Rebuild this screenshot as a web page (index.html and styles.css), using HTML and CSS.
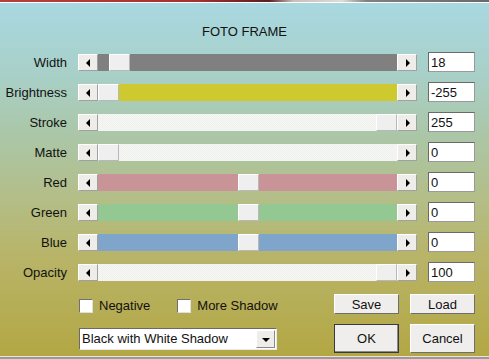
FILE: index.html
```html
<!DOCTYPE html>
<html lang="en">
<head>
    <meta charset="UTF-8">
    <title>Foto Frame</title>
    <link rel="stylesheet" href="styles.css">
</head>
<body>
    <!-- strip of the picture behind the dialog -->
    <div class="photo-strip"></div>

    <div class="dialog">
        <div class="title">FOTO FRAME</div>

        <div class="sliders">
            <label>Width</label>
            <div class="scrollbar">
                <span class="arrow left"></span>
                <div class="track gray"><span class="thumb" style="margin-left: 11px"></span></div>
                <span class="arrow right"></span>
            </div>
            <input class="value" type="text" value="18">

            <label>Brightness</label>
            <div class="scrollbar">
                <span class="arrow left"></span>
                <div class="track yellow"><span class="thumb" style="margin-left: 0px"></span></div>
                <span class="arrow right"></span>
            </div>
            <input class="value" type="text" value="-255">

            <label>Stroke</label>
            <div class="scrollbar">
                <span class="arrow left"></span>
                <div class="track white"><span class="thumb" style="margin-left: 278px"></span></div>
                <span class="arrow right"></span>
            </div>
            <input class="value" type="text" value="255">

            <label>Matte</label>
            <div class="scrollbar">
                <span class="arrow left"></span>
                <div class="track white"><span class="thumb" style="margin-left: 0px"></span></div>
                <span class="arrow right"></span>
            </div>
            <input class="value" type="text" value="0">

            <label>Red</label>
            <div class="scrollbar">
                <span class="arrow left"></span>
                <div class="track red"><span class="thumb" style="margin-left: 140px"></span></div>
                <span class="arrow right"></span>
            </div>
            <input class="value" type="text" value="0">

            <label>Green</label>
            <div class="scrollbar">
                <span class="arrow left"></span>
                <div class="track green"><span class="thumb" style="margin-left: 140px"></span></div>
                <span class="arrow right"></span>
            </div>
            <input class="value" type="text" value="0">

            <label>Blue</label>
            <div class="scrollbar">
                <span class="arrow left"></span>
                <div class="track blue"><span class="thumb" style="margin-left: 140px"></span></div>
                <span class="arrow right"></span>
            </div>
            <input class="value" type="text" value="0">

            <label>Opacity</label>
            <div class="scrollbar">
                <span class="arrow left"></span>
                <div class="track white"><span class="thumb" style="margin-left: 278px"></span></div>
                <span class="arrow right"></span>
            </div>
            <input class="value" type="text" value="100">
        </div>

        <div class="bottom">
            <div class="checks">
                <span class="check"><span class="box"></span>Negative</span>
                <span class="check"><span class="box"></span>More Shadow</span>
            </div>
            <button class="btn">Save</button>
            <button class="btn">Load</button>

            <div class="select-wrap">
                <div class="select">
                    <span class="select-text">Black with White Shadow</span>
                    <span class="select-btn"></span>
                </div>
            </div>
            <button class="btn big default">OK</button>
            <button class="btn big">Cancel</button>
        </div>
    </div>

    <div class="bottom-edge"></div>
</body>
</html>
```

FILE: styles.css
```css
body {
    margin: 0;
    padding: 0;
    width: 489px;
    height: 359px;
    overflow: hidden;
    font-family: 'Liberation Sans', Arial, sans-serif;
    font-size: 13px;
    color: #111;
    background: #9a9a9a;
}

/* thin slice of the photo behind the dialog */
.photo-strip {
    height: 2px;
    background: linear-gradient(to right, #b8403c 0%, #a83030 40%, #5a2020 55%, #c8c0b8 60%, #e0dcd8 70%, #808080 75%, #6a6a6a 100%);
    border-bottom: 1px solid #fff;
}

.dialog {
    height: 353px;
    box-sizing: border-box;
    padding-top: 21px;
    background: linear-gradient(to bottom, #a9d8e1 0%, #a8d0c8 20%, #abc6a6 38%, #b3be88 55%, #b8b468 72%, #b3a744 100%);
}

.title {
    text-align: center;
    line-height: 16px;
    height: 16px;
}

/* slider rows */
.sliders {
    margin-top: 7px;
    display: grid;
    grid-template-columns: 67px 339px 47px;
    grid-auto-rows: 30px;
    column-gap: 11px;
    align-items: center;
}

.sliders label {
    text-align: right;
    line-height: 16px;
    padding-top: 1px;
}

.scrollbar {
    display: flex;
    height: 17px;
}

.arrow {
    width: 20px;
    height: 17px;
    box-sizing: border-box;
    background: #eeedea;
    border-top: 1px solid #fff;
    border-left: 1px solid #fff;
    border-right: 1px solid #a0a0a0;
    border-bottom: 1px solid #a0a0a0;
    position: relative;
    flex: none;
}

.arrow::after {
    content: "";
    position: absolute;
    top: 4px;
    width: 0;
    height: 0;
    border-top: 4px solid transparent;
    border-bottom: 4px solid transparent;
}

.arrow.left::after {
    left: 7px;
    border-right: 4px solid #000;
}

.arrow.right::after {
    left: 8px;
    border-left: 4px solid #000;
}

.track {
    flex: 1;
    display: flex;
    height: 17px;
}

.track.gray { background: #808080; }
.track.yellow { background: #cdc92f; }
.track.white {
    background: repeating-conic-gradient(#f6f7f5 0 25%, #eef1ee 0 50%) 0 0 / 2px 2px;
}
.track.red { background: #c99497; }
.track.green { background: #93c892; }
.track.blue { background: #7fa6ca; }

.thumb {
    width: 21px;
    height: 17px;
    box-sizing: border-box;
    background: #efefef;
    border-top: 1px solid #fff;
    border-left: 1px solid #fff;
    border-right: 1px solid #b8b8b8;
    border-bottom: 1px solid #b8b8b8;
}

.value {
    width: 47px;
    height: 20px;
    box-sizing: border-box;
    margin: 0;
    padding: 1px 2px 0;
    border: 1px solid #6a6a6a;
    border-right-color: #9a9a9a;
    border-bottom-color: #9a9a9a;
    background: #fff;
    font-family: 'Liberation Sans', Arial, sans-serif;
    font-size: 13px;
    color: #111;
}

/* checkboxes, combo and buttons */
.bottom {
    margin-top: 7px;
    margin-left: 79px;
    display: grid;
    grid-template-columns: 244px 65px 65px;
    grid-template-rows: 20px 29px;
    column-gap: 11px;
    row-gap: 10px;
    align-items: center;
}

.checks {
    display: flex;
    align-items: center;
    padding-top: 3px;
}

.check {
    display: flex;
    align-items: center;
    line-height: 16px;
}

.check + .check {
    margin-left: 27px;
}

.box {
    width: 14px;
    height: 14px;
    box-sizing: border-box;
    background: #fff;
    border-top: 1px solid #707070;
    border-left: 1px solid #707070;
    border-right: 1px solid #e0e0e0;
    border-bottom: 1px solid #e0e0e0;
    margin-right: 6px;
}

.btn {
    margin: 0;
    padding: 0;
    height: 20px;
    box-sizing: border-box;
    background: #efeeec;
    border-top: 1px solid #fff;
    border-left: 1px solid #fff;
    border-right: 1px solid #6e6e6e;
    border-bottom: 1px solid #6e6e6e;
    font-family: 'Liberation Sans', Arial, sans-serif;
    font-size: 13px;
    color: #111;
}

.btn.big {
    height: 29px;
}

.btn.default {
    outline: 1px solid #3a3a3a;
    outline-offset: -1px;
    box-shadow: inset -1px -1px 0 #8a8a8a;
}

.select-wrap {
    display: flex;
    align-items: center;
}

.select {
    width: 198px;
    height: 22px;
    box-sizing: border-box;
    display: flex;
    align-items: center;
    background: #fff;
    border: 1px solid #6a6a6a;
    border-right-color: #e8e8e8;
    border-bottom-color: #e8e8e8;
}

.select-text {
    flex: 1;
    padding-left: 2px;
    line-height: 16px;
}

.select-btn {
    width: 19px;
    height: 18px;
    margin-right: 1px;
    box-sizing: border-box;
    background: #eeedea;
    border-top: 1px solid #fff;
    border-left: 1px solid #fff;
    border-right: 1px solid #8a8a8a;
    border-bottom: 1px solid #8a8a8a;
    position: relative;
}

.select-btn::after {
    content: "";
    position: absolute;
    left: 5px;
    top: 7px;
    border-left: 4px solid transparent;
    border-right: 4px solid transparent;
    border-top: 4px solid #000;
}

.bottom-edge {
    height: 1px;
    background: #e8e4dc;
    border-bottom: 2px solid #9a9a9a;
}
```
